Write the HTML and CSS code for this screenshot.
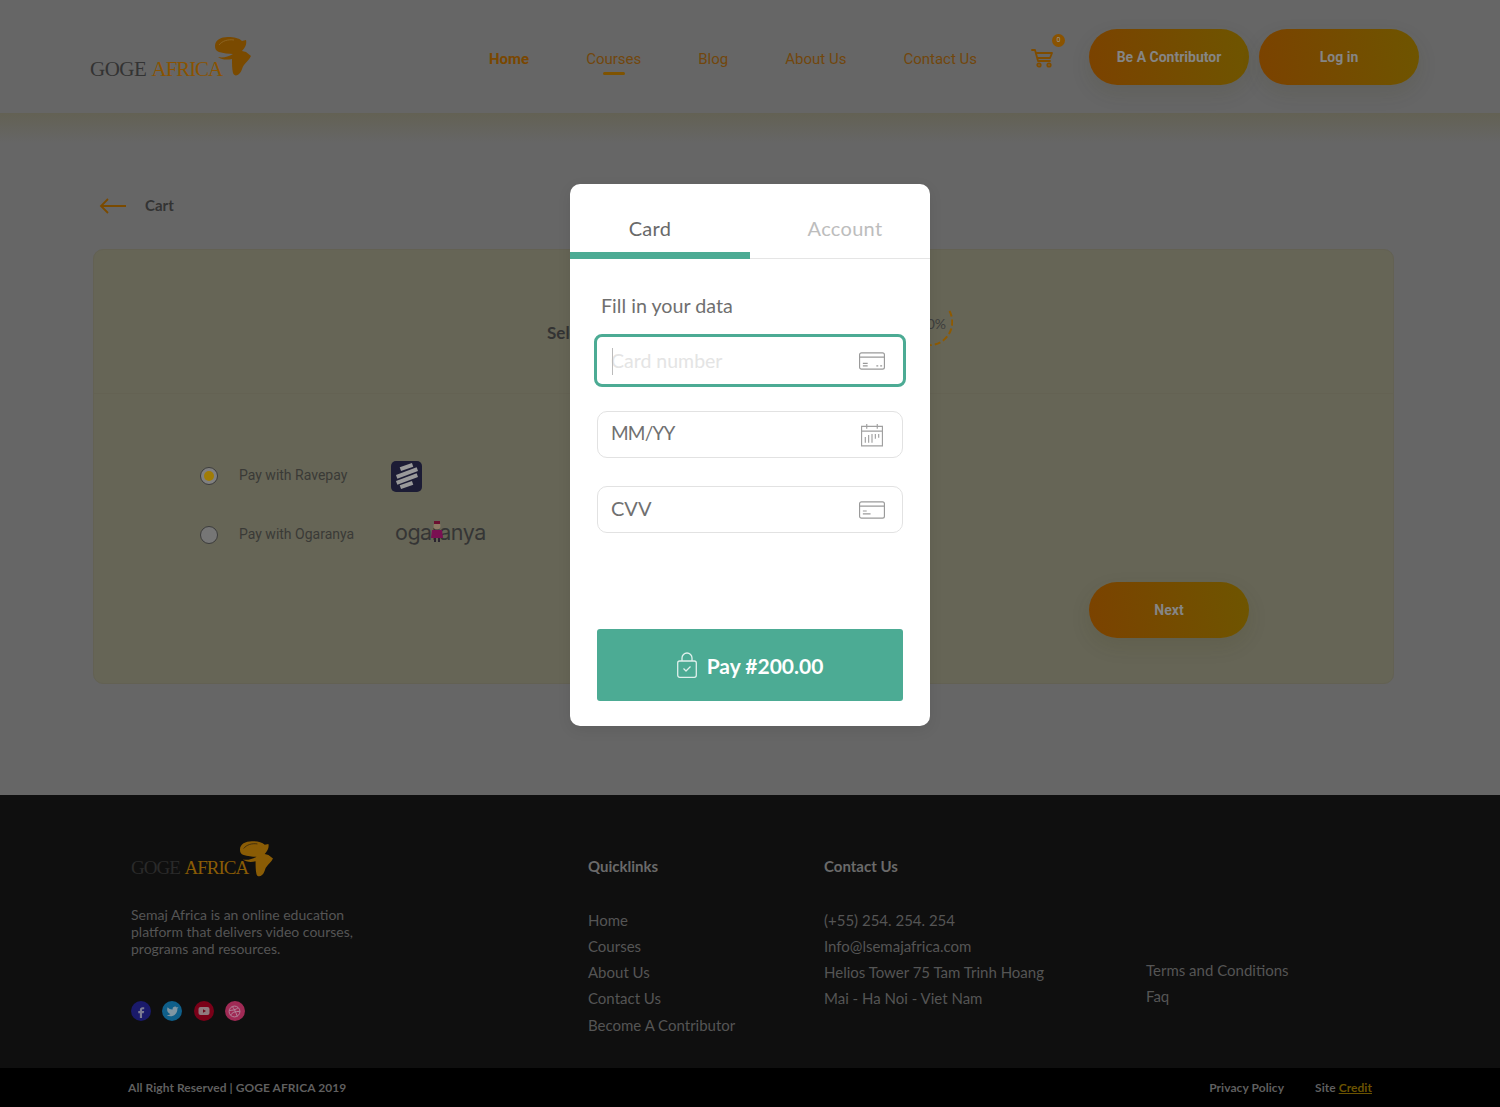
FILE: index.html
```html
<!DOCTYPE html>
<html lang="en">
<head>
    <meta charset="UTF-8">
    <meta name="viewport" content="width=device-width, initial-scale=1.0">
    <title>Checkout - Goge Africa</title>
    <link rel="stylesheet" href="styles.css">
</head>
<body>
    <header class="topbar">
        <a class="logo" href="#">
            <span class="logo-text"><span class="logo-goge">GOGE</span> <span class="logo-africa">AFRICA</span></span>
            <svg class="logo-mark" viewBox="0 0 36 40"><path fill="#7a4a00" d="M0 9C0 3 6 0 13 0c6 0 11 1 14 4l4-1c1 4-1 8-4 11l4 1 5 4c-2 4-5 6-7 9-2 2-2 7-5 9-2 2-5 2-6-1-1-4-1-9-1-14-5 1-10 1-14-2 5 1 10 0 15-3-4 0-10-1-14-2-3-1-4-3-4-6z"/><path fill="none" stroke="#8f6a2a" stroke-width=".8" d="M4 8c3-4 9-6 15-5"/></svg>
        </a>
        <nav class="nav">
            <a class="nav-link nav-home" href="#">Home</a>
            <a class="nav-link nav-active" href="#">Courses</a>
            <a class="nav-link" href="#">Blog</a>
            <a class="nav-link" href="#">About Us</a>
            <a class="nav-link" href="#">Contact Us</a>
        </nav>
        <a class="cart" href="#">
            <svg viewBox="0 0 22 20" width="22" height="20" fill="none" stroke="#7f4c00" stroke-width="1.8" stroke-linejoin="round" stroke-linecap="round"><path d="M1 2h3l3 11h12M5 5h16l-2 5H6.500"/><circle cx="8" cy="17" r="1.700"/><circle cx="18" cy="17" r="1.700"/></svg>
            <span class="cart-badge">0</span>
        </a>
        <a class="pill" href="#">Be A Contributor</a>
        <a class="pill pill-login" href="#">Log in</a>
    </header>

    <main class="page">
        <a class="back" href="#">
            <svg viewBox="0 0 28 16" width="28" height="16" fill="none" stroke="#7a4a00" stroke-width="1.800"><path d="M27 8H2M9 1L2 8l7 7"/></svg>
            <span>Cart</span>
        </a>
        <section class="card">
            <div class="card-head">
                <h2 class="card-title">Select Payment Method</h2>
                <div class="ring">
                    <svg viewBox="0 0 48 48" width="48" height="48" fill="none"><path class="ring-arc" d="M44.500 13A23.300 23.300 0 0 1 24 47.300A23.300 23.300 0 0 1 .7 24"/></svg>
                    <span class="ring-label">100%</span>
                </div>
            </div>
            <div class="card-body">
                <div class="methods">
                    <div class="method">
                        <span class="radio radio-on"></span>
                        <span class="method-label">Pay with Ravepay</span>
                        <span class="rave">
                            <i></i><i></i><i></i><i></i>
                        </span>
                    </div>
                    <div class="method">
                        <span class="radio"></span>
                        <span class="method-label">Pay with Ogaranya</span>
                        <span class="ogaranya">ogaranya
                            <svg viewBox="0 0 14 22" width="14" height="22"><circle cx="7" cy="6" r="3.500" fill="#8c7a64"/><path fill="#6b1030" d="M4 1h6v3H4z"/><path fill="#7a0f52" d="M2 10h10l1 8H1z"/><path fill="#2a2430" d="M4 18h2v4H4zM8 18h2v4H8z"/></svg>
                        </span>
                    </div>
                </div>
                <a class="pill pill-next" href="#">Next</a>
            </div>
        </section>
    </main>

    <footer class="footer">
        <div class="footer-about">
            <a class="logo logo-small" href="#">
                <span class="logo-text"><span class="logo-goge">GOGE</span> <span class="logo-africa">AFRICA</span></span>
                <svg class="logo-mark" viewBox="0 0 36 40"><path fill="#8a5c05" d="M0 9C0 3 6 0 13 0c6 0 11 1 14 4l4-1c1 4-1 8-4 11l4 1 5 4c-2 4-5 6-7 9-2 2-2 7-5 9-2 2-5 2-6-1-1-4-1-9-1-14-5 1-10 1-14-2 5 1 10 0 15-3-4 0-10-1-14-2-3-1-4-3-4-6z"/><path fill="none" stroke="#2a2110" stroke-width=".8" d="M4 8c3-4 9-6 15-5"/></svg>
            </a>
            <p class="footer-text">Semaj Africa is an online education platform that delivers video courses, programs and resources.</p>
            <div class="socials">
                <a class="social social-fb" href="#"><svg viewBox="0 0 24 24" width="13" height="13"><path fill="#7b7b93" d="M14 8h3V4h-3c-3 0-5 2-5 5v2H6v4h3v9h4v-9h3l1-4h-4V9c0-.6.4-1 1-1z"/></svg></a>
                <a class="social social-tw" href="#"><svg viewBox="0 0 24 24" width="13" height="13"><path fill="#7f96a3" d="M23 3a10.900 10.900 0 0 1-3 1.400 4.500 4.500 0 0 0-7.900 3v1A10.700 10.700 0 0 1 3 4s-4 9 5 13a11.600 11.600 0 0 1-7 2c9 5 20 0 20-11.500a4.500 4.500 0 0 0-.1-.8A7.700 7.700 0 0 0 23 3z"/></svg></a>
                <a class="social social-yt" href="#"><svg viewBox="0 0 24 24" width="12" height="12"><rect x="1" y="4" width="22" height="16" rx="4" fill="#8f7a7f"/><path fill="#6e0a1c" d="M10 8.500l6 3.500-6 3.500z"/></svg></a>
                <a class="social social-dr" href="#"><svg viewBox="0 0 24 24" width="13" height="13" fill="none" stroke="#b4849a" stroke-width="1.800"><circle cx="12" cy="12" r="10"/><path d="M8 3c4 5 7 11 9 18M2.500 10c6 0 12-1 16-5M4.500 19c3-5 8-8 17-7"/></svg></a>
            </div>
        </div>
        <div class="footer-col">
            <h4 class="footer-head">Quicklinks</h4>
            <a href="#">Home</a>
            <a href="#">Courses</a>
            <a href="#">About Us</a>
            <a href="#">Contact Us</a>
            <a href="#">Become A Contributor</a>
        </div>
        <div class="footer-col footer-contact">
            <h4 class="footer-head">Contact Us</h4>
            <a href="#">(+55) 254. 254. 254</a>
            <a href="#">Info@lsemajafrica.com</a>
            <a href="#">Helios Tower 75 Tam Trinh Hoang</a>
            <a href="#">Mai - Ha Noi - Viet Nam</a>
        </div>
        <div class="footer-col footer-legal">
            <a href="#">Terms and Conditions</a>
            <a href="#">Faq</a>
        </div>
    </footer>
    <div class="copybar">
        <span>All Right Reserved | GOGE AFRICA 2019</span>
        <span class="copy-links">
            <a href="#">Privacy Policy</a>
            <span>Site <a class="credit" href="#">Credit</a></span>
        </span>
    </div>

    <div class="modal">
        <div class="tabs">
            <span class="tab tab-active">Card</span>
            <span class="tab">Account</span>
        </div>
        <form class="pay-form">
            <p class="form-title">Fill in your data</p>
            <div class="field field-focus">
                <span class="caret"></span>
                <span class="placeholder">Card number</span>
                <svg viewBox="0 0 27 18" width="26" height="18" fill="none" stroke="#9a9a9a" stroke-width="1.200"><rect x=".6" y=".6" width="25.800" height="16.800" rx="2"/><path d="M1 5h25M4 11.500h5M4 14h5M18 14h2M22 14h2"/></svg>
            </div>
            <div class="field field-date">
                <span class="value value-date">MM/YY</span>
                <svg viewBox="0 0 23 24" width="22" height="24" fill="none" stroke="#a0a0a0" stroke-width="1.200"><path d="M.6 3h21.800v20.400H.6zM.6 8h21.800M6 .5v5M17 .5v5M4.500 14v6M8 12v8M11.500 11v9M15 11v5M18.500 11v4"/></svg>
            </div>
            <div class="field">
                <span class="value">CVV</span>
                <svg viewBox="0 0 27 18" width="26" height="18" fill="none" stroke="#9a9a9a" stroke-width="1.200"><rect x=".6" y=".6" width="25.800" height="16.800" rx="2"/><path d="M1 5h25M4 10h4M4 13h8"/></svg>
            </div>
            <button class="pay-btn" type="button">
                <svg viewBox="0 0 20 26" width="20" height="26" fill="none" stroke="#dff0ec" stroke-width="1.300" stroke-linejoin="round"><rect x=".7" y="9" width="18.600" height="16.300" rx="2"/><path d="M5 9V6a5 5 0 0 1 10 0v3M6.500 16.500l2.500 2.500 4.500-4.500"/></svg>
                <span>Pay #200.00</span>
            </button>
        </form>
    </div>
</body>
</html>
```

FILE: styles.css
```css
* {
    box-sizing: border-box;
}
body {
    margin: 0;
    width: 1500px;
    height: 1107px;
    overflow: hidden;
    position: relative;
    background: #666;
    font-family: "Lato", "Open Sans", sans-serif;
    color: #333;
}
a {
    color: inherit;
    text-decoration: none;
}

/* top bar */
.topbar {
    height: 113px;
    display: flex;
    align-items: center;
    padding: 0 0 0 90px;
    background: #666;
    position: relative;
    font-family: "Roboto", sans-serif;
}
.topbar > * {
    flex: none;
}
.logo {
    display: block;
    position: relative;
    width: 161px;
    height: 40px;
    margin-top: 1px;
}
.logo-text {
    position: absolute;
    left: 0;
    bottom: -4px;
    font-family: "Liberation Serif", serif;
    font-size: 21px;
    line-height: 24px;
    white-space: nowrap;
}
.logo-goge {
    color: #333;
    letter-spacing: -.5px;
}
.logo-africa {
    color: #8a5300;
    letter-spacing: -1.1px;
}
.logo-mark {
    position: absolute;
    right: 0;
    top: 0;
    width: 36px;
    height: 40px;
}
.nav {
    display: flex;
    gap: 57px;
    margin-left: 238px;
    font-size: 15px;
    color: #72470d;
    white-space: nowrap;
}
.nav-link {
    position: relative;
    line-height: 18px;
    margin-top: 5px;
}
.nav-home {
    font-weight: 700;
    color: #7a4700;
}
.nav-active::after {
    content: "";
    position: absolute;
    left: 17px;
    bottom: -7px;
    width: 22px;
    height: 3px;
    border-radius: 2px;
    background: #7f5300;
}
.cart {
    position: relative;
    margin-left: 54px;
    margin-right: 36px;
    width: 22px;
    height: 20px;
    margin-top: 2px;
}
.cart-badge {
    position: absolute;
    left: 21px;
    top: -14px;
    width: 13px;
    height: 13px;
    border-radius: 50%;
    background: #8a5300;
    color: #999;
    font-size: 7px;
    line-height: 13px;
    text-align: center;
}
.pill {
    display: block;
    width: 160px;
    height: 56px;
    border-radius: 28px;
    margin-top: 1px;
    background: linear-gradient(80deg, #7b4200, #6e5500);
    box-shadow: 0 8px 20px rgba(60, 55, 20, 0.12);
    color: #858585;
    font-family: "Roboto", sans-serif;
    font-size: 14px;
    font-weight: 700;
    line-height: 56px;
    text-align: center;
}
.pill-login {
    margin-left: 10px;
}

/* page behind the dialog */
.page {
    height: 682px;
    padding: 83px 106px 0 93px;
    background: linear-gradient(#636154, #666 30px);
}
.back {
    display: flex;
    align-items: center;
    gap: 18px;
    height: 20px;
    margin-left: 6px;
    font-size: 15px;
    font-weight: 700;
    color: #333;
}
.back span {
    margin-top: -2px;
}
.card {
    margin-top: 33px;
    height: 435px;
    border: 1px solid #636153;
    border-radius: 10px;
    background: #666556;
}
.card-head {
    height: 144px;
    display: flex;
    justify-content: center;
    align-items: center;
    padding-left: 13px;
    border-bottom: 1px solid #646253;
}
.card-title {
    width: 358px;
    margin: 22px 0 0;
    font-size: 17px;
    font-weight: 700;
    color: #333;
    white-space: nowrap;
}
.ring {
    position: relative;
    width: 48px;
    height: 48px;
}
.ring-arc {
    stroke: #8f5a00;
    stroke-width: 2;
    stroke-dasharray: 6 3;
}
.ring-label {
    position: absolute;
    right: 7px;
    top: 17px;
    font-size: 14px;
    color: #3d3d3d;
}
.card-body {
    position: relative;
    height: 290px;
    padding: 66px 0 0 106px;
}
.methods {
    display: flex;
    flex-direction: column;
    gap: 27px;
}
.method {
    display: flex;
    align-items: center;
    height: 32px;
}
.radio {
    width: 18px;
    height: 18px;
    border-radius: 50%;
    border: 1px solid #3c3c3c;
    background: #767676;
    display: flex;
    align-items: center;
    justify-content: center;
}
.radio-on {
    background: #808080;
}
.radio-on::after {
    content: "";
    width: 10px;
    height: 10px;
    border-radius: 50%;
    background: #a07c05;
}
.method-label {
    width: 152px;
    margin-left: 21px;
    margin-top: -2px;
    font-family: "Roboto", sans-serif;
    font-size: 14px;
    color: #3a3a36;
}
.rave {
    width: 31px;
    height: 31px;
    border-radius: 5px;
    background: #1c1c35;
    display: flex;
    flex-direction: column;
    align-items: center;
    justify-content: center;
    gap: 2px;
}
.rave i {
    display: block;
    width: 22px;
    height: 4px;
    background: #9a9a9a;
    transform: rotate(-20deg);
}
.rave i:first-child,
.rave i:last-child {
    width: 13px;
}
.ogaranya {
    position: relative;
    margin-left: 4px;
    margin-top: -6px;
    font-family: "Inter", sans-serif;
    font-size: 21.500px;
    letter-spacing: -.5px;
    color: #353535;
    white-space: nowrap;
}
.ogaranya svg {
    position: absolute;
    left: 35px;
    top: 1px;
}
.pill-next {
    position: absolute;
    right: 144px;
    top: 188px;
    margin: 0;
}

/* footer */
.footer {
    height: 273px;
    display: flex;
    padding: 46px 0 0 131px;
    background: #0f0f0f;
    color: #555;
    font-size: 15px;
}
.footer-about {
    width: 457px;
}
.logo-small {
    width: 142px;
    height: 37px;
    margin: 0;
}
.logo-small .logo-text {
    bottom: -2px;
    font-size: 19px;
}
.logo-small .logo-goge {
    color: #2a2a2a;
    letter-spacing: -1px;
}
.logo-small .logo-africa {
    color: #8a5c05;
    letter-spacing: -1px;
}
.logo-small .logo-mark {
    width: 33px;
    height: 37px;
}
.footer-text {
    width: 240px;
    margin: 28px 0 0;
    font-size: 14px;
    line-height: 17px;
}
.socials {
    display: flex;
    gap: 11.300px;
    margin-top: 44px;
}
.social {
    width: 20px;
    height: 20px;
    border-radius: 50%;
    display: flex;
    align-items: center;
    justify-content: center;
}
.social-fb { background: #1a1a6b; }
.social-tw { background: #0f5f8a; }
.social-yt { background: #7a0018; }
.social-dr { background: #a02a55; }
.footer-col {
    display: flex;
    flex-direction: column;
    width: 236px;
}
.footer-col a {
    line-height: 26.3px;
}
.footer-head {
    margin: 16px 0 31.500px;
    font-size: 15px;
    line-height: 18px;
    font-weight: 700;
    color: #6a6a6a;
}
.footer-contact {
    width: 322px;
}
.footer-legal {
    padding-top: 116px;
}

.copybar {
    height: 39px;
    display: flex;
    justify-content: space-between;
    align-items: center;
    padding: 0 128px;
    background: #000;
    color: #5f5f5f;
    font-size: 12px;
    font-weight: 700;
    letter-spacing: .06px;
}
.copy-links {
    display: flex;
    gap: 31px;
}
.credit {
    color: #6b5300;
    text-decoration: underline;
}

/* payment dialog */
.modal {
    position: absolute;
    left: 570px;
    top: 184px;
    width: 360px;
    height: 542px;
    border-radius: 10px;
    background: #fff;
    box-shadow: 0 4px 14px rgba(0, 0, 0, 0.08);
    overflow: hidden;
}
.tabs {
    display: flex;
    height: 75px;
    border-bottom: 1px solid #e5e5e5;
}
.tab {
    position: relative;
    width: 180px;
    padding: 33px 0 0 10px;
    text-align: center;
    font-size: 20px;
    letter-spacing: .3px;
    line-height: 22px;
    color: #bdbdbd;
}
.tab:first-child {
    padding: 33px 20px 0 0;
}
.tab-active {
    color: #696969;
}
.tab-active::after {
    content: "";
    position: absolute;
    left: 0;
    right: 0;
    bottom: -1px;
    height: 7px;
    background: #4cab94;
}
.pay-form {
    padding: 0 27px;
    display: flex;
    flex-direction: column;
}
.form-title {
    margin: 35px 0 16px 4px;
    font-size: 19.700px;
    line-height: 24px;
    color: #6f6f6f;
}
.field {
    height: 47px;
    margin-bottom: 28px;
    display: flex;
    align-items: center;
    justify-content: space-between;
    padding: 0 17px 0 13px;
    border: 1px solid #e2e2e2;
    border-radius: 10px;
    font-size: 20px;
    color: #707070;
}
.field-date {
    padding-right: 19px;
}
.value {
    margin-top: -4px;
}
.value-date {
    font-size: 19px;
    letter-spacing: -.8px;
}
.field-focus {
    position: relative;
    height: 53px;
    margin: 0 -3px 24px;
    padding: 0 18px 0 14px;
    border: 3px solid #4cab94;
    border-radius: 8px;
}
.caret {
    position: absolute;
    left: 15px;
    top: 11px;
    width: 1px;
    height: 27px;
    background: #bbb;
}
.placeholder {
    margin-top: -1px;
    font-size: 19.500px;
    color: #e4e4e4;
}
.pay-btn {
    margin-top: 68px;
    height: 72px;
    display: flex;
    align-items: center;
    justify-content: center;
    gap: 10px;
    border: none;
    border-radius: 3px;
    background: #4cab94;
    color: #fff;
    font-family: inherit;
    font-size: 21px;
    font-weight: 700;
}
```
